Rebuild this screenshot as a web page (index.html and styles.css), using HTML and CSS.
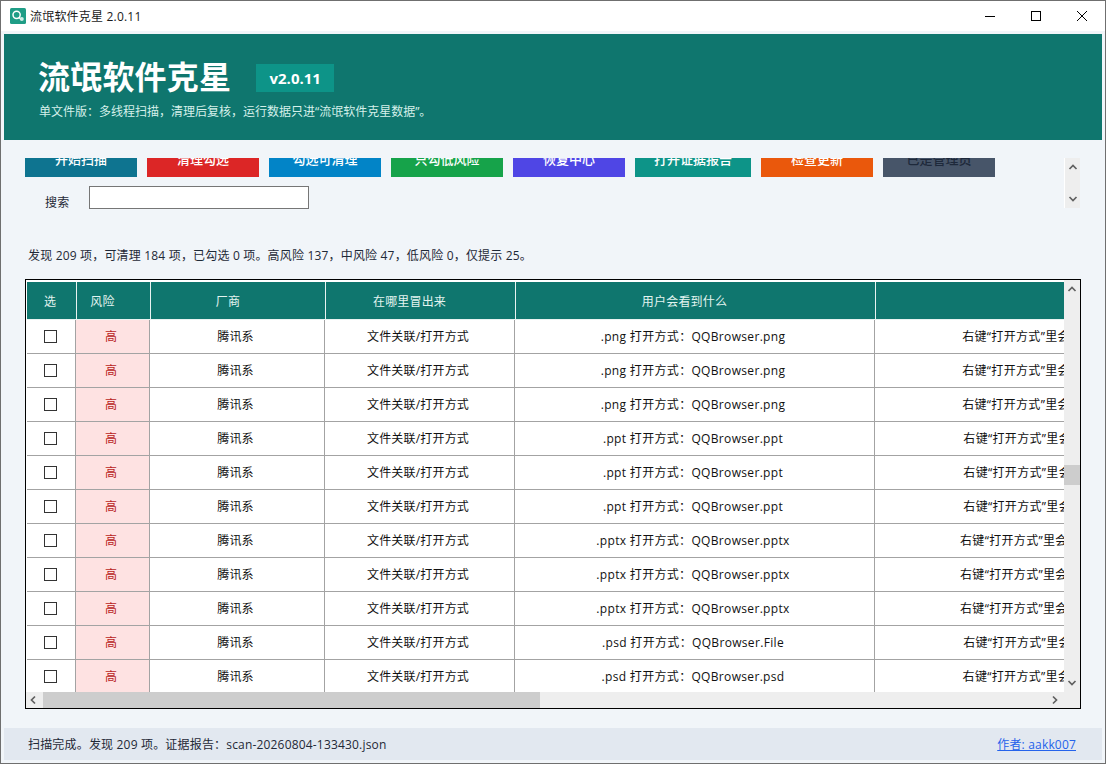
FILE: index.html
```html
<!DOCTYPE html>
<html lang="zh-CN">
<head>
<meta charset="utf-8">
<title>流氓软件克星 2.0.11</title>
<link rel="stylesheet" href="styles.css">
</head>
<body>
<div class="window">
  <div class="titlebar">
    <svg class="appicon" viewBox="0 0 16 16"><rect width="16" height="16" rx="1.5" fill="#1f9d86"/><circle cx="6.6" cy="6.8" r="3.6" fill="none" stroke="#fff" stroke-width="1.5"/><path d="M9 9.4l2 1.8" stroke="#fff" stroke-width="1.5"/><circle cx="11.8" cy="11" r="2" fill="#cfeee6"/></svg>
    <span class="apptitle">流氓软件克星 2.0.11</span>
    <div class="winctl">
      <svg class="ctl" viewBox="0 0 46 30"><path d="M18 15.5h10" stroke="#000" fill="none"/></svg>
      <svg class="ctl" viewBox="0 0 46 30"><rect x="18.5" y="10.5" width="9" height="9" stroke="#000" fill="none"/></svg>
      <svg class="ctl" viewBox="0 0 46 30"><path d="M18 10l10 10M28 10L18 20" stroke="#000" fill="none"/></svg>
    </div>
  </div>
  <main class="main">
    <header class="hero">
      <div class="hero-top">
        <h1 class="hero-title">流氓软件克星</h1>
        <span class="badge">v2.0.11</span>
      </div>
      <p class="hero-sub">单文件版：多线程扫描，清理后复核，运行数据只进“流氓软件克星数据”。</p>
    </header>

    <section class="tools">
      <div class="tools-view">
        <div class="btnrow">
          <button class="btn c1">开始扫描</button>
          <button class="btn c2">清理勾选</button>
          <button class="btn c3">勾选可清理</button>
          <button class="btn c4">只勾低风险</button>
          <button class="btn c5">恢复中心</button>
          <button class="btn c6 wide">打开证据报告</button>
          <button class="btn c7">检查更新</button>
          <button class="btn c8">已是管理员</button>
        </div>
        <div class="searchrow">
          <label class="searchlabel">搜索</label>
          <input class="searchinput" type="text">
        </div>
      </div>
      <div class="tools-bar">
        <svg class="chev" viewBox="0 0 10 8"><path d="M1.5 6L5 2.5 8.5 6" /></svg>
        <svg class="chev" viewBox="0 0 10 8"><path d="M1.5 2L5 5.5 8.5 2" /></svg>
      </div>
    </section>

    <p class="stats">发现 209 项，可清理 184 项，已勾选 0 项。高风险 137，中风险 47，低风险 0，仅提示 25。</p>

    <section class="tablebox">
      <div class="tableview">
        <div class="row head">
          <div class="th pad-sel">选</div>
          <div class="th pad-risk">风险</div>
          <div class="th pad-vendor">厂商</div>
          <div class="th pad-where">在哪里冒出来</div>
          <div class="th pad-user">用户会看到什么</div>
          <div class="th"></div>
        </div>
        <div class="row"><div class="td box"><input class="check" type="checkbox"></div><div class="td risk">高</div><div class="td">腾讯系</div><div class="td">文件关联/打开方式</div><div class="td file">.png 打开方式：QQBrowser.png</div><div class="td file">右键“打开方式”里会出现 QQBrowser.png</div></div>
        <div class="row"><div class="td box"><input class="check" type="checkbox"></div><div class="td risk">高</div><div class="td">腾讯系</div><div class="td">文件关联/打开方式</div><div class="td file">.png 打开方式：QQBrowser.png</div><div class="td file">右键“打开方式”里会出现 QQBrowser.png</div></div>
        <div class="row"><div class="td box"><input class="check" type="checkbox"></div><div class="td risk">高</div><div class="td">腾讯系</div><div class="td">文件关联/打开方式</div><div class="td file">.png 打开方式：QQBrowser.png</div><div class="td file">右键“打开方式”里会出现 QQBrowser.png</div></div>
        <div class="row"><div class="td box"><input class="check" type="checkbox"></div><div class="td risk">高</div><div class="td">腾讯系</div><div class="td">文件关联/打开方式</div><div class="td file">.ppt 打开方式：QQBrowser.ppt</div><div class="td file">右键“打开方式”里会出现 QQBrowser.ppt</div></div>
        <div class="row"><div class="td box"><input class="check" type="checkbox"></div><div class="td risk">高</div><div class="td">腾讯系</div><div class="td">文件关联/打开方式</div><div class="td file">.ppt 打开方式：QQBrowser.ppt</div><div class="td file">右键“打开方式”里会出现 QQBrowser.ppt</div></div>
        <div class="row"><div class="td box"><input class="check" type="checkbox"></div><div class="td risk">高</div><div class="td">腾讯系</div><div class="td">文件关联/打开方式</div><div class="td file">.ppt 打开方式：QQBrowser.ppt</div><div class="td file">右键“打开方式”里会出现 QQBrowser.ppt</div></div>
        <div class="row"><div class="td box"><input class="check" type="checkbox"></div><div class="td risk">高</div><div class="td">腾讯系</div><div class="td">文件关联/打开方式</div><div class="td file">.pptx 打开方式：QQBrowser.pptx</div><div class="td file">右键“打开方式”里会出现 QQBrowser.pptx</div></div>
        <div class="row"><div class="td box"><input class="check" type="checkbox"></div><div class="td risk">高</div><div class="td">腾讯系</div><div class="td">文件关联/打开方式</div><div class="td file">.pptx 打开方式：QQBrowser.pptx</div><div class="td file">右键“打开方式”里会出现 QQBrowser.pptx</div></div>
        <div class="row"><div class="td box"><input class="check" type="checkbox"></div><div class="td risk">高</div><div class="td">腾讯系</div><div class="td">文件关联/打开方式</div><div class="td file">.pptx 打开方式：QQBrowser.pptx</div><div class="td file">右键“打开方式”里会出现 QQBrowser.pptx</div></div>
        <div class="row"><div class="td box"><input class="check" type="checkbox"></div><div class="td risk">高</div><div class="td">腾讯系</div><div class="td">文件关联/打开方式</div><div class="td file">.psd 打开方式：QQBrowser.File</div><div class="td file">右键“打开方式”里会出现 QQBrowser.File</div></div>
        <div class="row"><div class="td box"><input class="check" type="checkbox"></div><div class="td risk">高</div><div class="td">腾讯系</div><div class="td">文件关联/打开方式</div><div class="td file">.psd 打开方式：QQBrowser.psd</div><div class="td file">右键“打开方式”里会出现 QQBrowser.psd</div></div>
      </div>
      <div class="vbar">
        <svg class="chev" viewBox="0 0 10 8"><path d="M1.5 6L5 2.5 8.5 6" /></svg>
        <div class="vtrack"><div class="vthumb"></div></div>
        <svg class="chev" viewBox="0 0 10 8"><path d="M1.5 2L5 5.5 8.5 2" /></svg>
      </div>
      <div class="hbar">
        <svg class="chevh" viewBox="0 0 8 10"><path d="M6 1.5L2.5 5 6 8.5" /></svg>
        <div class="hthumb"></div>
        <svg class="chevh right" viewBox="0 0 8 10"><path d="M2 1.5L5.5 5 2 8.5" /></svg>
      </div>
    </section>

    <footer class="status">
      <span>扫描完成。发现 209 项。证据报告：scan-20260804-133430.json</span>
      <a class="author" href="#">作者: aakk007</a>
    </footer>
  </main>
</div>
</body>
</html>
```

FILE: styles.css
```css
* { box-sizing: border-box; }
html, body { margin: 0; padding: 0; background: #f1f5f9; }
body {
  font-family: "Open Sans", "Noto Sans CJK SC", sans-serif;
  font-size: 12px;
  letter-spacing: 0.18px;
  color: #1f2937;
}
.window {
  width: 1106px;
  height: 764px;
  border: 1px solid #6f6f6f;
  display: flex;
  flex-direction: column;
  overflow: hidden;
}
.titlebar {
  height: 30px;
  background: #fff;
  display: flex;
  align-items: center;
  padding-left: 9px;
  flex: none;
}
.appicon { width: 16px; height: 16px; margin-right: 4px; }
.apptitle { font-size: 12px; color: #1a1a1a; letter-spacing: 0.2px; }
.winctl { margin-left: auto; display: flex; }
.ctl { width: 46px; height: 30px; }
.main {
  flex: 1;
  display: flex;
  flex-direction: column;
  padding: 3px;
  min-height: 0;
}
.hero {
  height: 106px;
  background: #0f766e;
  padding: 22px 34px 0;
  flex: none;
  color: #fff;
}
.hero-top { display: flex; align-items: center; height: 42px; }
.hero-title { margin: 0; font-size: 32px; line-height: 42px; font-weight: 700; letter-spacing: 0.2px; }
.badge {
  margin: 2px 0 0 25px;
  width: 78px;
  height: 28px;
  background: #0d9488;
  font-size: 15px;
  font-weight: 700;
  letter-spacing: 0;
  display: flex;
  align-items: center;
  justify-content: center;
}
.hero-sub { margin: 4px 0 0 1px; font-size: 12px; line-height: 20px; color: #d5f0ea; letter-spacing: 0; }
.tools {
  margin-top: 18px;
  height: 51px;
  display: flex;
  align-items: flex-start;
  padding-left: 21px;
  flex: none;
}
.tools-view { width: 1039px; height: 51px; overflow: hidden; }
.btnrow { display: flex; gap: 10px; margin-top: -18px; }
.btn {
  width: 112px;
  height: 37px;
  border: 0;
  padding: 0;
  color: #fff;
  font-family: inherit;
  font-size: 13px;
  font-weight: 500;
}
.btn.wide { width: 116px; }
.c1 { background: #0e7490; }
.c2 { background: #dc2626; }
.c3 { background: #0284c7; }
.c4 { background: #16a34a; }
.c5 { background: #4f46e5; }
.c6 { background: #0d9488; }
.c7 { background: #ea580c; }
.c8 { background: #475569; color: #1e293b; }
.searchrow { display: flex; align-items: flex-start; margin-top: 9px; padding-left: 20px; }
.searchlabel { width: 44px; font-size: 12px; line-height: 17px; margin-top: 8px; color: #1f2937; }
.searchinput { width: 220px; height: 23px; border: 1px solid #767676; background: #fff; padding: 0; outline: 0; }
.tools-bar {
  width: 16px;
  height: 50px;
  background: #eee;
  border-left: 1px solid #fff;
  display: flex;
  flex-direction: column;
  justify-content: space-between;
  align-items: center;
  padding: 5px 0;
}
.chev { width: 10px; height: 8px; flex: none; }
.chev path, .chevh path { fill: none; stroke: #606060; stroke-width: 1.7; }
.chevh { width: 8px; height: 10px; flex: none; }
.stats { margin: 0; height: 70px; padding: 22px 0 0 24px; line-height: 50px; color: #1f2937; flex: none; }
.tablebox {
  margin-left: 21px;
  width: 1056px;
  height: 430px;
  border: 1px solid #000;
  background: #fff;
  display: grid;
  grid-template-columns: 1038px 16px;
  grid-template-rows: 412px 16px;
  flex: none;
}
.tableview { overflow: hidden; padding: 2px 0 0 1px; }
.row {
  display: grid;
  grid-template-columns: 49px 74px 175px 190px 360px 408px;
  width: 1256px;
  height: 34px;
}
.row.head {
  grid-template-columns: 50px 74px 175px 190px 360px 407px;
  height: 38px;
  background: #0f766e;
  border-bottom: 1px solid #e8f3f1;
}
.th {
  display: flex;
  align-items: center;
  justify-content: center;
  color: #e3f4f0;
  border-right: 1px solid #e8f3f1;
}
.pad-sel { padding-right: 3px; }
.pad-risk { padding-right: 22px; }
.pad-vendor { padding-right: 20px; }
.pad-where { padding-right: 22px; }
.pad-user { padding-right: 22px; }
.td {
  display: flex;
  align-items: center;
  justify-content: center;
  border-right: 1px solid #a3a3a3;
  border-bottom: 1px solid #a3a3a3;
  padding: 0 3px 2px 0;
  color: #111;
  white-space: nowrap;
  overflow: hidden;
}
.td.box { padding-bottom: 0; }
.td.file { letter-spacing: 0.33px; }
.risk { background: #fee2e2; color: #b91c1c; }
.check {
  appearance: none;
  -webkit-appearance: none;
  width: 13px;
  height: 13px;
  margin: 0 0 0 1px;
  border: 1px solid #333;
  background: #fff;
}
.vbar {
  background: #eee;
  display: flex;
  flex-direction: column;
  align-items: center;
  padding: 5px 0;
}
.vtrack { flex: 1; width: 100%; padding-top: 172px; }
.vthumb { height: 20px; background: #cdcdcd; }
.hbar {
  grid-column: 1 / span 2;
  background: #eee;
  display: flex;
  align-items: center;
  padding-left: 3px;
}
.hthumb { width: 497px; height: 16px; background: #cdcdcd; margin-left: 6px; }
.chevh.right { margin-left: auto; margin-right: 21px; }
.status {
  margin-top: 19px;
  height: 32px;
  background: #e2e8f0;
  display: flex;
  align-items: center;
  justify-content: space-between;
  padding: 0 26px 0 24px;
  color: #1f2937;
  flex: none;
}
.author { color: #2563eb; }
```
